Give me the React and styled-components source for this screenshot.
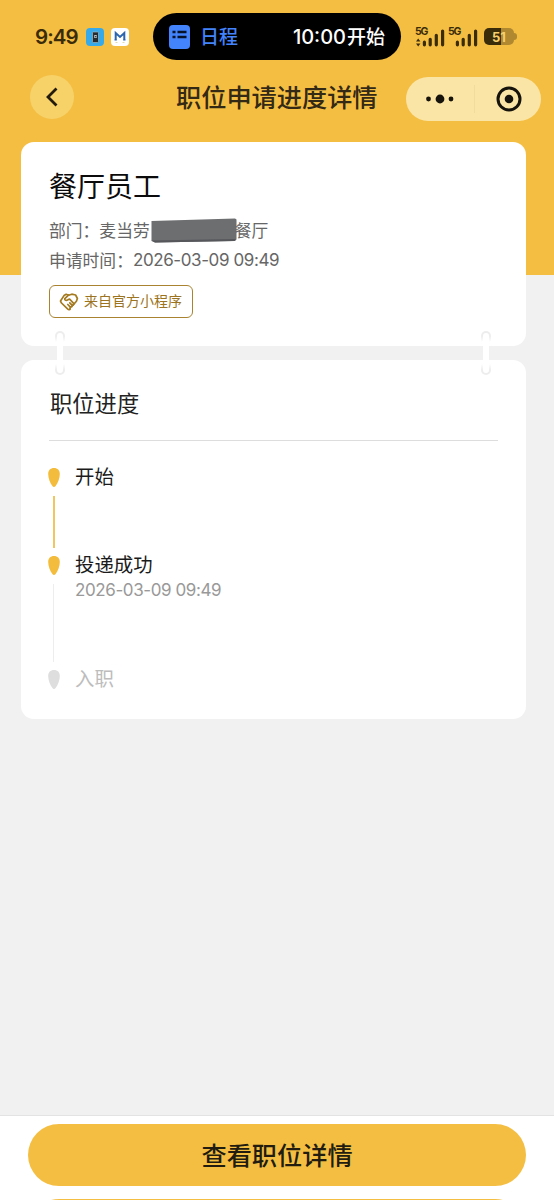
import React from 'react';
import styled, { createGlobalStyle } from 'styled-components';

const steps = [
  { title: '开始', height: 88, line: 52, active: true, lineActive: true },
  { title: '投递成功', time: '2026-03-09 09:49', height: 114, line: 78, active: true },
  { title: '入职', height: 30 },
];

const Signal = ({ arrows }) => (
  <svg width="31" height="22" viewBox="0 0 31 22">
    <text x="0" y="8.500" fontSize="10.5" fontWeight="700" fill="#3b2c09" fontFamily="Inter, sans-serif" textLength="13.5">5G</text>
    {arrows && <path d="M1 15.500L3.200 12.500l2.200 3zM1 17.500L3.200 20.500l2.200-3z" fill="#3b2c09" />}
    <path
      d="M9.400 16.200V18.800M15.200 13.300V18.800M21.300 9.300V18.800M27.600 5V18.800"
      stroke="#3b2c09"
      strokeWidth="3.200"
      strokeLinecap="round"
    />
  </svg>
);

const Pin = ({ active }) => (
  <svg width="12" height="19" viewBox="0 0 12 19">
    <path
      d="M6 0C2.400 0 .2 2.300.2 6c0 4 1.900 9 4.200 12 .9 1.200 2.300 1.200 3.200 0 2.300-3 4.200-8 4.200-12C11.800 2.300 9.600 0 6 0z"
      fill={active ? '#f4bc3c' : '#dedede'}
    />
  </svg>
);

const Handshake = () => (
  <svg width="20" height="18" viewBox="0 0 20 18" fill="none" stroke="#a47a20" strokeWidth="1.7" strokeLinecap="round" strokeLinejoin="round">
    <path d="M9.500 2.200L7.200 1.300 5 2.600 1.500 8l1 2 6.300 6.200c.9.800 1.900.5 2.300-.4" />
    <path d="M9.500 2.200L12.800 1.200l3.800.8 1.800 3.500-1 2.800-2.800 3.200" />
    <path d="M9.500 2.200L5.800 5.600c-.5 1.700 1.500 2.400 3.300 1l1.700-.4 3.800 4.200c.5 1.200-.5 2-1.500 1.500" />
    <path d="M10.800 9.800l2.400 2.500c.2 1.200-.6 1.800-1.500 1.500M8.800 11.500l2.300 2.300v2" />
  </svg>
);

const App = () => {
  return (
    <Page>
      <GlobalStyle />
      <StatusBar>
        <Clock>9:49</Clock>
        <AppIcons>
          <svg width="18" height="18" viewBox="0 0 18 18">
            <rect width="18" height="18" rx="4" fill="#35a9e9" />
            <rect x="6.500" y="4" width="6" height="10.500" rx=".8" fill="#252a30" stroke="#a3b7bf" strokeWidth=".7" />
            <path d="M8.200 7h2.600v3H8.200z" fill="#b8bec2" />
            <path d="M9 8h1.300v1.200H9z" fill="#354047" />
          </svg>
          <svg width="18" height="18" viewBox="0 0 18 18">
            <rect width="18" height="18" rx="4" fill="#fff" />
            <path d="M4.700 12V5L9 9l4.300-4v7" fill="none" stroke="#2b66ae" strokeWidth="2" />
            <path d="M3.500 12h2.300M12.200 12h2.300" stroke="#2b66ae" strokeWidth="1" />
            <path d="M4.500 14.500h2M11.500 14.500h2" stroke="#dfdcae" strokeWidth="1" />
          </svg>
        </AppIcons>
        <Island>
          <svg width="21" height="24" viewBox="0 0 21 24">
            <rect width="21" height="24" rx="4" fill="#4383fb" />
            <path d="M3.500 7h3M3.500 12h3M8.500 7h9M8.500 12h9" stroke="#06132b" strokeWidth="2.400" />
          </svg>
          <IslandLabel>日程</IslandLabel>
          <IslandTime>10:00<span>开始</span></IslandTime>
        </Island>
        <Signals>
          <Signal arrows />
          <Signal />
        </Signals>
        <Battery>
          <b>51</b>
          <BatteryTip />
        </Battery>
      </StatusBar>

      <NavBar>
        <BackButton>
          <svg width="14" height="20" viewBox="0 0 14 20">
            <path d="M11.500 1.500L3 10l8.500 8.500" fill="none" stroke="#241c0b" strokeWidth="2.800" />
          </svg>
        </BackButton>
        <NavTitle>职位申请进度详情</NavTitle>
        <Capsule>
          <svg width="28" height="10" viewBox="0 0 28 10" fill="#15130c">
            <circle cx="2.500" cy="5" r="2.400" />
            <circle cx="14" cy="5" r="4.400" />
            <circle cx="25" cy="5" r="2.400" />
          </svg>
          <Divider />
          <svg width="26" height="26" viewBox="0 0 26 26">
            <circle cx="13" cy="13" r="11" fill="none" stroke="#15130c" strokeWidth="3" />
            <circle cx="13" cy="13" r="4.300" fill="#15130c" />
          </svg>
        </Capsule>
      </NavBar>

      <Cards>
        <JobCard>
          <JobTitle>餐厅员工</JobTitle>
          <InfoRow>
            部门：麦当劳
            <svg width="86" height="26" viewBox="0 0 86 26">
              <path d="M.5 4L84 1.500l1.500 1v20l-2 1.500L4 25.500.500 24z" fill="#6d6e70" />
              <path d="M.5 23.500l83-1.500 1.500 1-1.500 1L4 25.500z" fill="#56575b" />
            </svg>
            餐厅
          </InfoRow>
          <InfoRow>
            申请时间：<Digits>2026-03-09 09:49</Digits>
          </InfoRow>
          <SourceTag>
            <Handshake />
            <span>来自官方小程序</span>
          </SourceTag>
        </JobCard>
        <ProgressCard>
          <Link $x="34px" />
          <Link $x="460px" />
          <SectionTitle>职位进度</SectionTitle>
          <Timeline>
            {steps.map((step) => (
              <Step key={step.title} $height={step.height}>
                <Track>
                  <Pin active={step.active} />
                  {step.line && <Line $height={step.line} $active={step.lineActive} />}
                </Track>
                <StepText>
                  <StepTitle $active={step.active}>{step.title}</StepTitle>
                  {step.time && <StepTime>{step.time}</StepTime>}
                </StepText>
              </Step>
            ))}
          </Timeline>
        </ProgressCard>
      </Cards>

      <Footer>
        <DetailButton>查看职位详情</DetailButton>
        <DetailButton />
      </Footer>
    </Page>
  );
};

export default App;


const GlobalStyle = createGlobalStyle`
  * {
    box-sizing: border-box;
  }
  body {
    margin: 0;
    font-family: 'Noto Sans CJK SC', sans-serif;
  }
  svg {
    display: block;
    flex-shrink: 0;
  }
`
const Page = styled.div`
  width: 554px;
  height: 1200px;
  display: flex;
  flex-direction: column;
  overflow: hidden;
  background: linear-gradient(#f4be43 275px, #f1f1f1 275px);
`
const StatusBar = styled.div`
  height: 73px;
  padding-left: 35px;
  display: flex;
  align-items: center;
  color: #3b2c09;
`
const Clock = styled.div`
  width: 51px;
  font-family: Inter, sans-serif;
  font-size: 20.5px;
  font-weight: 600;
  letter-spacing: -0.9px;
`
const AppIcons = styled.div`
  width: 67px;
  display: flex;
  gap: 7px;
`
const Island = styled.div`
  width: 248px;
  height: 47px;
  padding: 0 16px;
  display: flex;
  align-items: center;
  border-radius: 24px;
  background: #000;
  font-size: 19px;
  font-weight: 500;
`
const IslandLabel = styled.div`
  margin-left: 10px;
  padding-bottom: 2px;
  color: #4383fb;
`
const IslandTime = styled.div`
  margin-left: auto;
  padding-bottom: 2px;
  color: #fff;
  font-family: Inter, 'Noto Sans CJK SC', sans-serif;
  font-size: 20px;
  white-space: nowrap;
  span {
    margin-left: 1px;
    font-size: 19px;
  }
`
const Signals = styled.div`
  margin-left: 14px;
  display: flex;
  gap: 2px;
`
const Battery = styled.div`
  width: 30px;
  height: 17px;
  margin-left: 5px;
  display: flex;
  align-items: center;
  border-radius: 5px;
  background: linear-gradient(90deg, #3b2c09 17px, #af8830 17px);
  color: #f4cf6d;
  font-family: Inter, sans-serif;
  font-size: 13px;
  b {
    width: 30px;
    flex-shrink: 0;
    text-align: center;
  }
`
const BatteryTip = styled.div`
  width: 3px;
  height: 7px;
  flex-shrink: 0;
  border-radius: 0 3px 3px 0;
  background: #af8830;
`
const NavBar = styled.div`
  height: 69px;
  padding: 2px 13px 0 30px;
  display: flex;
  align-items: flex-start;
`
const BackButton = styled.div`
  width: 44px;
  height: 44px;
  display: flex;
  align-items: center;
  justify-content: center;
  border-radius: 50%;
  background: #f7d269;
`
const NavTitle = styled.div`
  margin-left: 102px;
  color: #332914;
  font-size: 25.2px;
  font-weight: 500;
  line-height: 42px;
  white-space: nowrap;
`
const Capsule = styled.div`
  width: 135px;
  height: 44px;
  margin: 2px 0 0 auto;
  padding: 0 19px 0 20px;
  display: flex;
  align-items: center;
  justify-content: space-between;
  border-radius: 22px;
  background: #fae5a6;
`
const Divider = styled.div`
  width: 1px;
  height: 28px;
  margin-right: 2px;
  background: #f1dc9e;
`
const Cards = styled.div`
  padding: 0 28px 0 21px;
  display: flex;
  flex-direction: column;
  gap: 14px;
`
const JobCard = styled.div`
  height: 204px;
  padding: 24px 28px 0;
  border-radius: 13px;
  background: #fff;
`
const JobTitle = styled.div`
  height: 49px;
  color: #0b0b0b;
  font-size: 28px;
  line-height: 38px;
`
const InfoRow = styled.div`
  height: 30px;
  display: flex;
  align-items: center;
  color: #666;
  font-size: 16.8px;
  white-space: nowrap;
  svg {
    margin: 0 -2px 0 1px;
  }
`
const Digits = styled.span`
  font-family: Inter, sans-serif;
  font-size: 17px;
  letter-spacing: -0.4px;
`
const SourceTag = styled.div`
  width: 144px;
  height: 33px;
  margin-top: 10px;
  padding-left: 9px;
  display: flex;
  align-items: center;
  gap: 5px;
  border: 1px solid #a98330;
  border-radius: 6px;
  color: #9c7421;
  font-size: 14px;
  white-space: nowrap;
  span {
    padding-bottom: 3px;
  }
`
const ProgressCard = styled.div`
  position: relative;
  height: 359px;
  padding: 0 28px;
  border-radius: 13px;
  background: #fff;
`
// rings that hold the two cards together
const Link = styled.div`
  position: absolute;
  top: -29px;
  left: ${props => props.$x};
  width: 10px;
  height: 44px;
  padding: 2px;
  border-radius: 5px;
  background: linear-gradient(#ededed 5px, transparent 11px, transparent 33px, #ededed 39px);
  &::after {
    content: '';
    display: block;
    height: 40px;
    border-radius: 3px;
    background: #fff;
  }
`
const SectionTitle = styled.div`
  height: 81px;
  padding-left: 1px;
  border-bottom: 1px solid #ddd;
  color: #222;
  font-size: 22.3px;
  line-height: 84px;
`
const Timeline = styled.div`
  padding-top: 27px;
`
const Step = styled.div`
  height: ${props => props.$height}px;
  display: flex;
  gap: 15px;
`
const Track = styled.div`
  width: 12px;
  margin-left: -1px;
  display: flex;
  flex-direction: column;
  align-items: center;
  gap: 9px;
`
const Line = styled.div`
  width: ${props => props.$active ? 2 : 1}px;
  height: ${props => props.$height}px;
  margin-right: 1px;
  background: ${props => props.$active ? '#f1c55f' : '#ededed'};
`
const StepText = styled.div`
  margin-top: -1px;
`
const StepTitle = styled.div`
  color: ${props => props.$active ? '#1b1b1b' : '#bdbdbd'};
  font-size: 19.4px;
  line-height: 18px;
`
const StepTime = styled.div`
  margin-top: 7px;
  color: #999;
  font-family: Inter, sans-serif;
  font-size: 17px;
  letter-spacing: -0.4px;
  line-height: 20px;
`
const Footer = styled.div`
  height: 85px;
  margin-top: auto;
  padding: 8px 28px 0;
  display: flex;
  flex-direction: column;
  gap: 13px;
  border-top: 1px solid #e3e3e3;
  background: #fff;
`
const DetailButton = styled.div`
  height: 62px;
  flex-shrink: 0;
  border-radius: 31px;
  background: #f4be43;
  color: #211c0f;
  font-size: 25.2px;
  font-weight: 500;
  line-height: 60px;
  text-align: center;
`
